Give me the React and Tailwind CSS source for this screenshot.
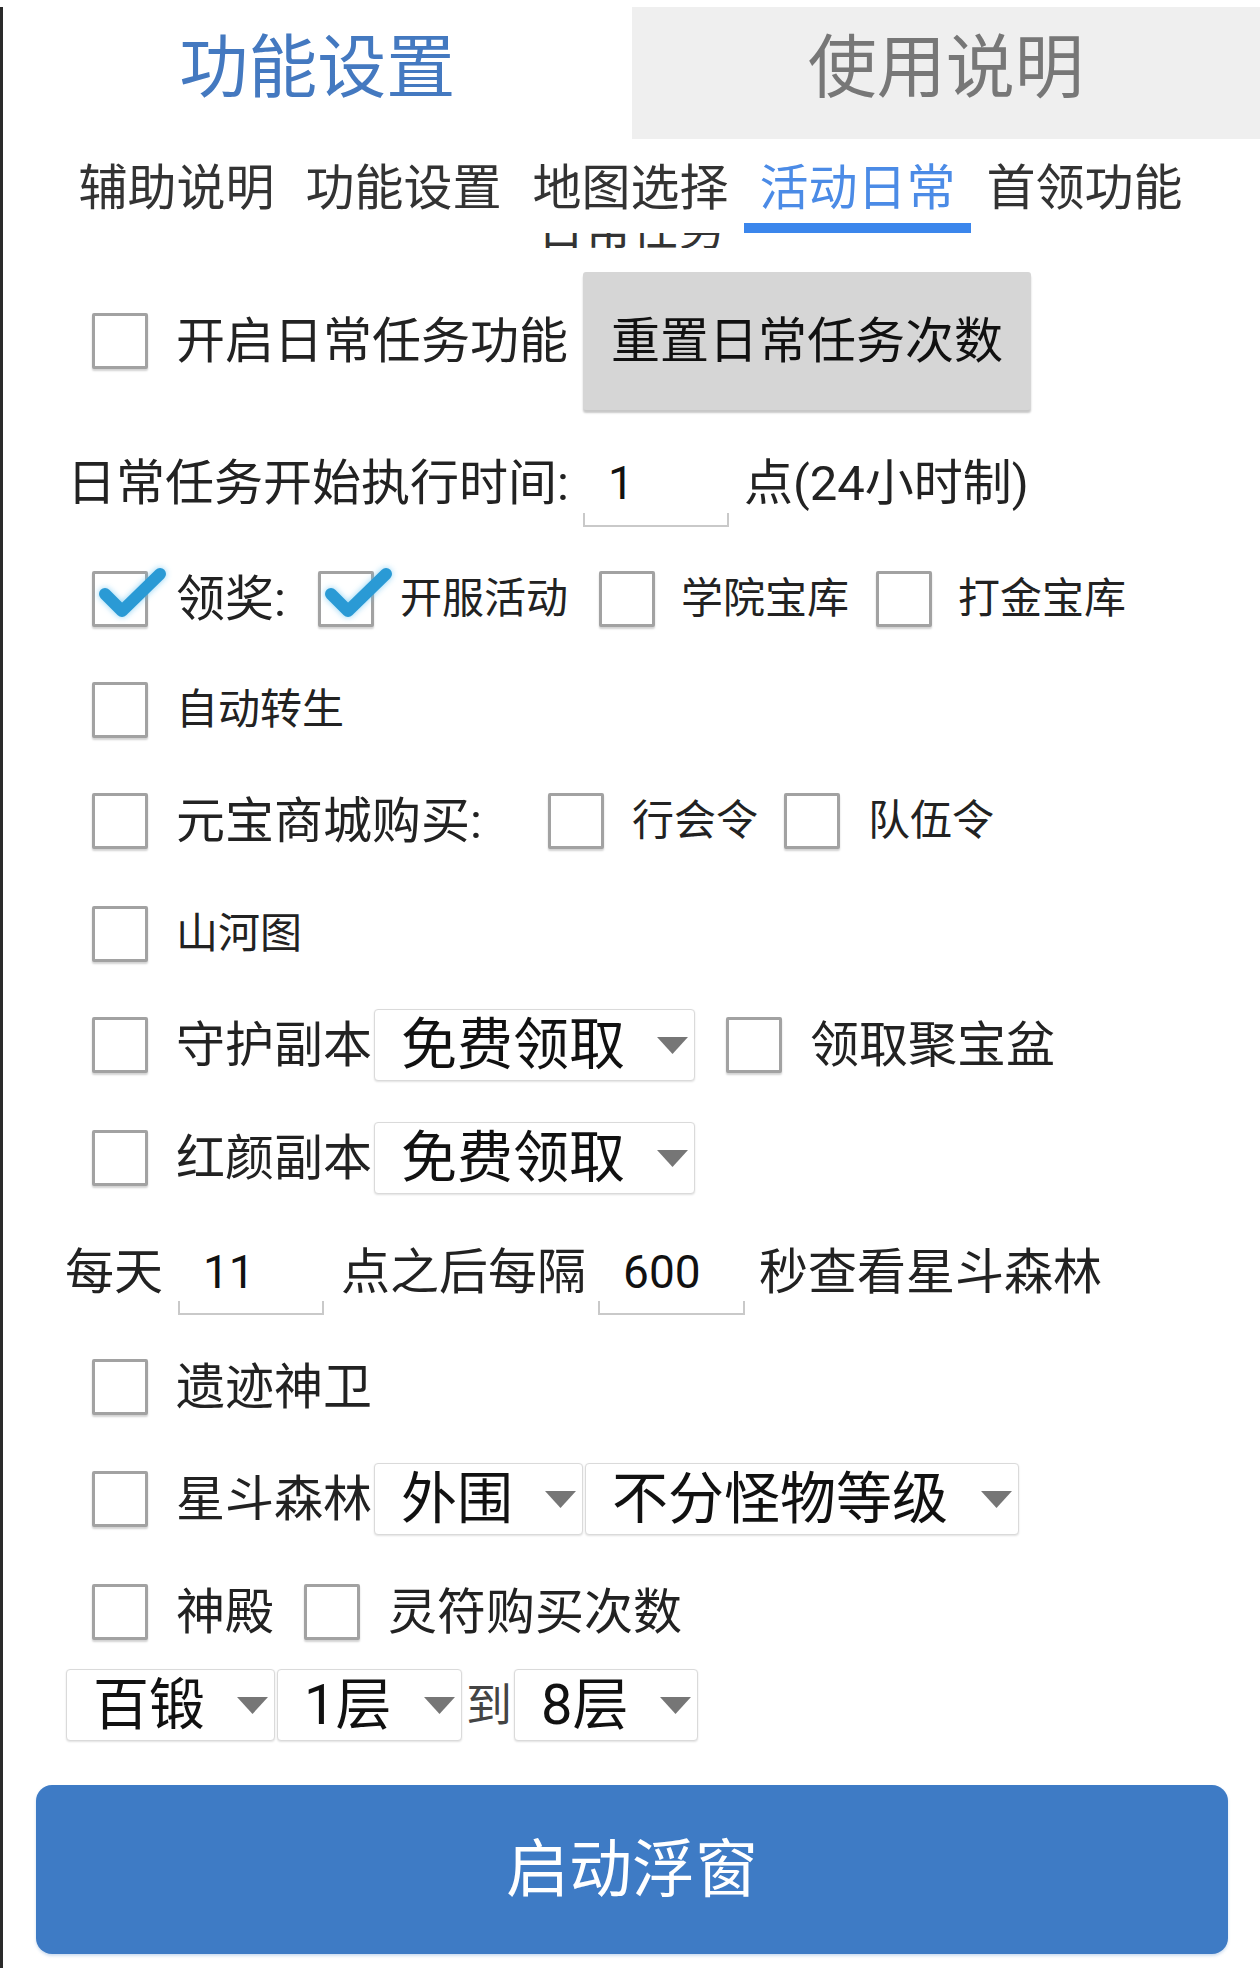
import React from "react";

const FONT = "font-[family-name:Roboto,'Noto_Sans_CJK_SC',sans-serif]";

// square checkbox, optional blue tick that pokes out of the box
function Box({ checked = false }) {
  return (
    <span className="relative block w-[56px] h-[56px] shrink-0 bg-white border-[3px] border-[#a2a2a2] rounded-[2px] shadow-[0_2px_2px_rgba(0,0,0,0.18)]">
      {checked && (
        <svg
          viewBox="0 0 76 56"
          className="absolute -left-[3px] -top-[9px] w-[76px] h-[56px] drop-shadow-[0_0_3px_rgba(90,190,240,0.7)]"
        >
          <polyline
            points="13,29 30,46 68,9"
            fill="none"
            stroke="#2a9ad5"
            strokeWidth="12"
            strokeLinecap="round"
            strokeLinejoin="round"
          />
        </svg>
      )}
    </span>
  );
}

function Label({ children, big = false, className = "" }) {
  return (
    <span
      className={`whitespace-nowrap leading-none text-[#222] ${
        big ? "text-[49px]" : "text-[42px]"
      } ${className}`}
    >
      {children}
    </span>
  );
}

// android-ish spinner with grey triangle
function Spinner({ text, width }) {
  return (
    <div
      className={`flex items-center justify-between h-[72px] pl-[26px] pr-[6px] bg-white border-[1.5px] border-[#dadada] rounded-[4px] shadow-[0_1px_2px_rgba(0,0,0,0.12)] ${width}`}
    >
      <span className="text-[56px] leading-none text-[#111] whitespace-nowrap">{text}</span>
      <svg viewBox="0 0 31 17" className="w-[31px] h-[17px] shrink-0">
        <polygon points="0,0 31,0 15.5,17" fill="#767676" />
      </svg>
    </div>
  );
}

// edit text with underline bracket
function Field({ value, width }) {
  return (
    <div className={`relative flex items-center h-full pl-[25px] ${width}`}>
      <span className="text-[46px] leading-none text-[#111]">{value}</span>
      <div className="absolute left-0 right-0 bottom-[1px] h-[14px] border-x-2 border-b-2 border-[#c9c9c9]" />
    </div>
  );
}

const subTabs = ["辅助说明", "功能设置", "地图选择", "活动日常", "首领功能"];

export default function App() {
  return (
    <div className={`w-[1260px] min-h-[1968px] bg-white pt-[7px] ${FONT}`}>
      <div className="border-l-[3px] border-[#2a2a2a] min-h-[1961px]">
        {/* top tabs */}
        <div className="flex h-[132px]">
          <div className="flex-1 flex justify-center pt-[27px]">
            <span className="text-[69px] leading-none text-[#4479c0]">功能设置</span>
          </div>
          <div className="flex-1 flex justify-center pt-[27px] bg-[#efefef]">
            <span className="text-[69px] leading-none text-[#777]">使用说明</span>
          </div>
        </div>

        {/* sub tabs */}
        <div className="flex h-[94px] pl-[60px]">
          {subTabs.map((t) => {
            const active = t === "活动日常";
            return (
              <div key={t} className="w-[227px] flex flex-col">
                <div className="flex-1 flex items-center justify-center pt-[14px]">
                  <span
                    className={`text-[49px] leading-none whitespace-nowrap ${
                      active ? "text-[#4b8be6]" : "text-[#333]"
                    }`}
                  >
                    {t}
                  </span>
                </div>
                <div className={`h-[10px] ${active ? "bg-[#3b86ec]" : ""}`} />
              </div>
            );
          })}
        </div>

        {/* section title scrolled under the tab bar */}
        <div className="h-[15px] overflow-hidden flex justify-center">
          <span className="text-[47px] leading-none text-[#333] -mt-[28px] h-[47px]">日常任务</span>
        </div>

        {/* rows */}
        <div className="flex items-center h-[138px] mt-[24px] pl-[89px]">
          <Box />
          <Label big className="ml-[28px]">开启日常任务功能</Label>
          <button className="ml-[15px] w-[448px] h-full bg-[#d6d6d6] rounded-[3px] shadow-[0_3px_2px_rgba(0,0,0,0.22)] flex items-center justify-center">
            <span className="text-[49px] leading-none text-[#111] whitespace-nowrap">重置日常任务次数</span>
          </button>
        </div>

        <div className="flex items-center h-[90px] mt-[28px] pl-[64px]">
          <Label big>日常任务开始执行时间:</Label>
          <Field value="1" width="w-[146px] ml-[14px]" />
          <Label big className="ml-[15px]">点(24小时制)</Label>
        </div>

        <div className="flex items-center h-[112px] mt-[15px] pl-[89px]">
          <Box checked />
          <Label big className="ml-[28px]">领奖:</Label>
          <span className="ml-[32px]"><Box checked /></span>
          <Label className="ml-[26px]">开服活动</Label>
          <span className="ml-[31px]"><Box /></span>
          <Label className="ml-[26px]">学院宝库</Label>
          <span className="ml-[27px]"><Box /></span>
          <Label className="ml-[26px]">打金宝库</Label>
        </div>

        <div className="flex items-center h-[110px] pl-[89px]">
          <Box />
          <Label className="ml-[28px]">自动转生</Label>
        </div>

        <div className="flex items-center h-[112px] pl-[89px]">
          <Box />
          <Label big className="ml-[28px]">元宝商城购买:</Label>
          <span className="ml-[66px]"><Box /></span>
          <Label className="ml-[28px]">行会令</Label>
          <span className="ml-[26px]"><Box /></span>
          <Label className="ml-[28px]">队伍令</Label>
        </div>

        <div className="flex items-center h-[114px] pl-[89px]">
          <Box />
          <Label className="ml-[28px]">山河图</Label>
        </div>

        <div className="flex items-center h-[108px] pl-[89px]">
          <Box />
          <Label big className="ml-[28px]">守护副本</Label>
          <Spinner text="免费领取" width="w-[321px] ml-[2px]" />
          <span className="ml-[31px]"><Box /></span>
          <Label big className="ml-[28px]">领取聚宝盆</Label>
        </div>

        <div className="flex items-center h-[118px] pl-[89px]">
          <Box />
          <Label big className="ml-[28px]">红颜副本</Label>
          <Spinner text="免费领取" width="w-[321px] ml-[2px]" />
        </div>

        <div className="flex items-center h-[88px] mt-[11px] pl-[62px]">
          <Label big>每天</Label>
          <Field value="11" width="w-[146px] ml-[15px]" />
          <Label big className="ml-[17px]">点之后每隔</Label>
          <Field value="600" width="w-[147px] ml-[12px]" />
          <Label big className="ml-[14px]">秒查看星斗森林</Label>
        </div>

        <div className="flex items-center h-[112px] mt-[15px] pl-[89px]">
          <Box />
          <Label big className="ml-[28px]">遗迹神卫</Label>
        </div>

        <div className="flex items-center h-[112px] pl-[89px]">
          <Box />
          <Label big className="ml-[28px]">星斗森林</Label>
          <Spinner text="外围" width="w-[209px] ml-[2px]" />
          <Spinner text="不分怪物等级" width="w-[434px] ml-[2px]" />
        </div>

        <div className="flex items-center h-[114px] pl-[89px]">
          <Box />
          <Label big className="ml-[28px]">神殿</Label>
          <span className="ml-[30px]"><Box /></span>
          <Label big className="ml-[28px]">灵符购买次数</Label>
        </div>

        <div className="flex items-center h-[72px] pl-[63px]">
          <Spinner text="百锻" width="w-[209px]" />
          <Spinner text="1层" width="w-[185px] ml-[2px]" />
          <span className="ml-[4px] text-[46px] leading-none text-[#444]">到</span>
          <Spinner text="8层" width="w-[184px] ml-[2px]" />
        </div>

        {/* start button */}
        <div className="pl-[33px] pr-[32px] mt-[44px]">
          <button className="w-full h-[169px] bg-[#3e7bc5] rounded-[16px] flex items-center justify-center shadow-[0_2px_3px_rgba(62,123,197,0.25)]">
            <span className="text-[63px] leading-none text-white">启动浮窗</span>
          </button>
        </div>
      </div>
    </div>
  );
}
